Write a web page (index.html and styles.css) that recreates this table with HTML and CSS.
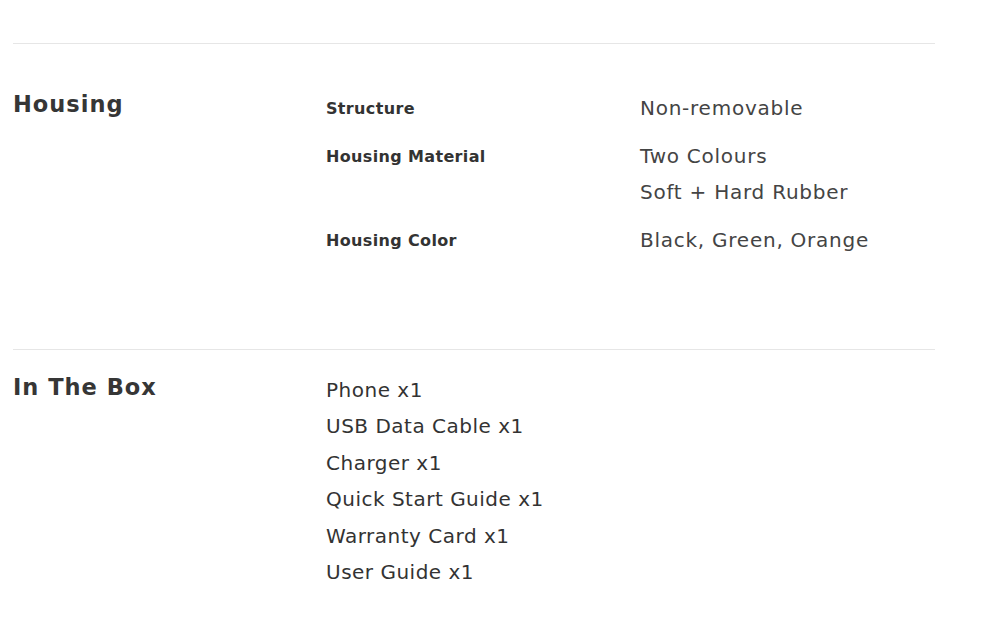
FILE: index.html
```html
<!DOCTYPE html>
<html lang="en">
<head>
<meta charset="utf-8">
<title>Specs</title>
<link rel="stylesheet" href="styles.css">
</head>
<body>
<div class="specs">
  <section class="spec-section spec-section--housing">
    <h2 class="spec-title">Housing</h2>
    <div class="spec-table">
      <div class="spec-row">
        <div class="spec-label">Structure</div>
        <div class="spec-value"><p>Non-removable</p></div>
      </div>
      <div class="spec-row">
        <div class="spec-label">Housing Material</div>
        <div class="spec-value"><p>Two Colours</p><p>Soft + Hard Rubber</p></div>
      </div>
      <div class="spec-row">
        <div class="spec-label">Housing Color</div>
        <div class="spec-value"><p>Black, Green, Orange</p></div>
      </div>
    </div>
  </section>
  <section class="spec-section spec-section--box">
    <h2 class="spec-title">In The Box</h2>
    <ul class="box-list">
      <li>Phone x1</li>
      <li>USB Data Cable x1</li>
      <li>Charger x1</li>
      <li>Quick Start Guide x1</li>
      <li>Warranty Card x1</li>
      <li>User Guide x1</li>
    </ul>
  </section>
</div>
</body>
</html>
```
FILE: styles.css
```css
html, body {
  margin: 0;
  padding: 0;
  background: #ffffff;
}
body {
  font-family: "DejaVu Sans", "Open Sans", sans-serif;
  color: #333333;
}
.specs {
  width: 922px;
  margin: 0 0 0 13px;
  padding-top: 43px;
}
.spec-section {
  display: grid;
  grid-template-columns: 313px 1fr;
  border-top: 1px solid #e6e6e6;
}
.spec-section--housing {
  padding-top: 46px;
  padding-bottom: 91px;
}
.spec-section--box {
  padding-top: 22px;
  padding-bottom: 30px;
}
.spec-title {
  margin: 0;
  font-size: 22.5px;
  font-weight: 700;
  letter-spacing: 1px;
  line-height: 29px;
  color: #363636;
}
.spec-section--box .spec-title {
  margin-top: 1px;
}
.spec-table {
  display: flex;
  flex-direction: column;
  gap: 12px;
}
.spec-row {
  display: grid;
  grid-template-columns: 314px 1fr;
}
.spec-label {
  padding-top: 1px;
  font-size: 16px;
  font-weight: 700;
  letter-spacing: 0.35px;
  line-height: 35px;
  color: #333333;
}
.spec-value p {
  margin: 0;
  font-size: 20px;
  font-weight: 400;
  letter-spacing: 0.75px;
  line-height: 36px;
  color: #444444;
}
.box-list {
  list-style: none;
  margin: 0;
  padding: 0;
}
.box-list li {
  font-size: 20px;
  letter-spacing: 0.5px;
  line-height: 36.4px;
  color: #333333;
}
```
